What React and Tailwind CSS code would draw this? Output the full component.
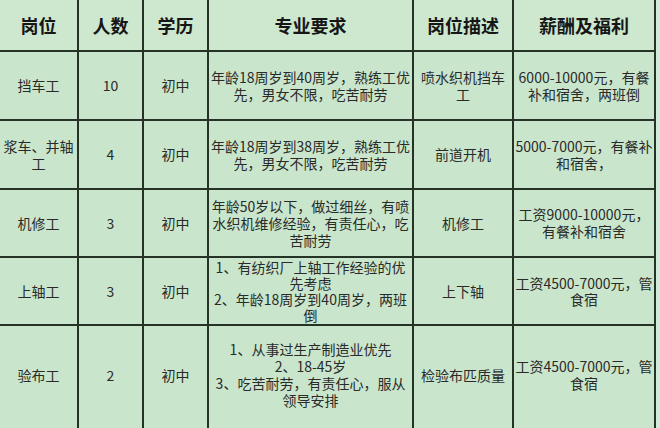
import React from "react";

const header = ["岗位", "人数", "学历", "专业要求", "岗位描述", "薪酬及福利"];

const rows = [
  {
    cells: [
      ["挡车工"],
      ["10"],
      ["初中"],
      ["年龄18周岁到40周岁，熟练工优", "先，男女不限，吃苦耐劳"],
      ["喷水织机挡车", "工"],
      ["6000-10000元，有餐", "补和宿舍，两班倒"],
    ],
  },
  {
    cells: [
      ["浆车、并轴", "工"],
      ["4"],
      ["初中"],
      ["年龄18周岁到38周岁，熟练工优", "先，男女不限，吃苦耐劳"],
      ["前道开机"],
      ["5000-7000元，有餐补", "和宿舍，"],
    ],
  },
  {
    cells: [
      ["机修工"],
      ["3"],
      ["初中"],
      ["年龄50岁以下，做过细丝，有喷", "水织机维修经验，有责任心，吃", "苦耐劳"],
      ["机修工"],
      ["工资9000-10000元，", "有餐补和宿舍"],
    ],
  },
  {
    tight: true,
    cells: [
      ["上轴工"],
      ["3"],
      ["初中"],
      ["1、有纺织厂上轴工作经验的优", "先考虑", "2、年龄18周岁到40周岁，两班", "倒"],
      ["上下轴"],
      ["工资4500-7000元，管", "食宿"],
    ],
  },
  {
    last: true,
    cells: [
      ["验布工"],
      ["2"],
      ["初中"],
      ["1、从事过生产制造业优先", "2、18-45岁", "3、吃苦耐劳，有责任心，服从", "领导安排"],
      ["检验布匹质量"],
      ["工资4500-7000元，管", "食宿"],
    ],
  },
];

const font = { fontFamily: '"Noto Sans CJK SC", "Noto Sans", sans-serif' };

export default function App() {
  return (
    <div
      className="w-[660px] h-[428px] overflow-hidden bg-[#c9e6cc] grid grid-cols-[79px_65px_65px_205px_100px_142px_1fr] grid-rows-[52px_69px_69px_68px_68px_102px]"
      style={font}
    >
      {header.map((h) => (
        <div
          key={h}
          className="flex items-center justify-center bg-[#cde8cf] border-r-2 border-b-2 border-[#243326] text-[18px] font-bold text-[#161616] pt-[1px]"
        >
          {h}
        </div>
      ))}
      <div className="bg-[#d3eada] row-span-6" />

      {rows.map((row, i) =>
        row.cells.map((lines, j) => (
          <div
            key={i + "-" + j}
            className={
              "flex flex-col items-center justify-center text-center text-[14px] text-[#2a2a2a] border-r-2 border-[#243326] " +
              (row.last ? "pb-[4px] " : "border-b-2 ") +
              (row.tight ? "leading-[16px] " : "leading-[17px] ")
            }
          >
            {lines.map((l, k) => (
              <span key={k} className="block whitespace-nowrap">
                {l}
              </span>
            ))}
          </div>
        ))
      )}
    </div>
  );
}
